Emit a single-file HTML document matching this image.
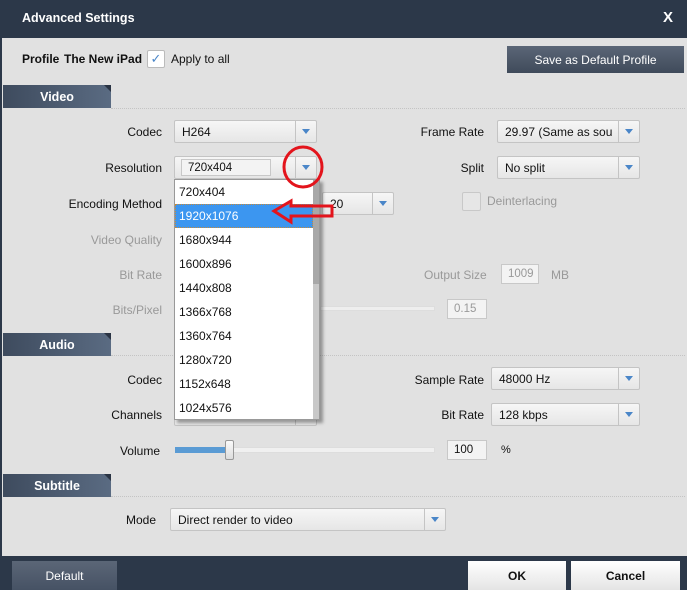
<!DOCTYPE html>
<html><head><meta charset="utf-8"><style>
*{margin:0;padding:0;box-sizing:border-box}
body{width:687px;height:590px;overflow:hidden;background:#e1e1e1;font-family:"Liberation Sans",Arial,sans-serif;font-size:12px;color:#111;position:relative}
.a{position:absolute}
.title{left:0;top:0;width:687px;height:38px;background:#2c3849;color:#fff;font-weight:bold;font-size:12.5px}
.lbl{text-align:right;width:140px;white-space:nowrap}
.dis{color:#999}
.cb{background:linear-gradient(#f6f6f6,#e6e6e6);border:1px solid #c4c4c4;border-radius:2px;height:23px;padding:4px 7px;white-space:nowrap;overflow:hidden}
.arr{position:absolute;right:0;top:0;width:21px;height:21px;border-left:1px solid #c4c4c4}
.arr:after{content:"";position:absolute;left:6px;top:8px;border-left:4px solid transparent;border-right:4px solid transparent;border-top:5px solid #4a86c8}
.tab{left:3px;width:108px;height:23px;background:linear-gradient(90deg,#3e4b5e,#5a6b82);color:#fff;font-weight:bold;font-size:12.5px;padding:5px 0 0 0;text-align:center;width:108px}
.tab:after{content:"";position:absolute;right:0;top:0;border-left:7px solid transparent;border-top:7px solid #2a3444}
.dot{height:1px;border-top:1px dotted #c4c4c4;left:111px;width:574px}
.box{background:#f3f3f3;border:1px solid #c8c8c8;height:20px;padding:3px 6px;font-size:11.5px}
.list{left:174px;top:179px;width:146px;height:241px;background:#fff;border:1px solid #999;box-shadow:3px 3px 3px rgba(0,0,0,.35)}
.it{position:absolute;left:0;width:138px;height:24px;padding:5px 4px}
.btn{text-align:center;padding-top:8px}
</style></head><body>
<div class="a" style="left:0;top:0;width:2px;height:590px;background:#2c3849"></div>
<div class="a title"><span class="a" style="left:22px;top:11px">Advanced Settings</span><span class="a" style="left:663px;top:9px;font-size:15px">X</span></div>
<div class="a" style="left:22px;top:52px;font-weight:bold">Profile</div>
<div class="a" style="left:64px;top:52px;font-weight:bold">The New iPad</div>
<div class="a" style="left:147px;top:50px;width:18px;height:18px;background:#fff;border:1px solid #bbb;border-radius:2px;color:#4a86c8;text-align:center;line-height:16px;font-size:13px">✓</div>
<div class="a" style="left:171px;top:52px">Apply to all</div>
<div class="a btn" style="left:507px;top:46px;width:177px;height:27px;background:linear-gradient(#5b6677,#3f4a5a);color:#fff;padding-top:7px">Save as Default Profile</div>

<div class="a tab" style="top:85px">Video</div><div class="a dot" style="top:108px"></div>
<div class="a lbl" style="left:22px;top:125px">Codec</div>
<div class="a cb" style="left:174px;top:120px;width:143px">H264<div class="arr"></div></div>
<div class="a lbl" style="left:344px;top:125px">Frame Rate</div>
<div class="a cb" style="left:497px;top:120px;width:143px">29.97 (Same as sou<div class="arr"></div></div>
<div class="a lbl" style="left:22px;top:161px">Resolution</div>
<div class="a cb" style="left:174px;top:156px;width:143px;padding:2px 6px"><div style="border:1px solid #c8c8c8;background:#f3f3f3;width:90px;height:17px;padding:2px 6px;font-size:11.5px">720x404</div><div class="arr"></div></div>
<div class="a lbl" style="left:344px;top:161px">Split</div>
<div class="a cb" style="left:497px;top:156px;width:143px">No split<div class="arr"></div></div>
<div class="a lbl" style="left:22px;top:197px">Encoding Method</div>
<div class="a cb" style="left:322px;top:192px;width:72px">20<div class="arr"></div></div>
<div class="a" style="left:462px;top:192px;width:19px;height:19px;border:1px solid #c8c8c8;border-radius:2px;background:#e6e6e6"></div>
<div class="a dis" style="left:487px;top:194px">Deinterlacing</div>
<div class="a lbl dis" style="left:22px;top:233px">Video Quality</div>
<div class="a lbl dis" style="left:22px;top:268px">Bit Rate</div>
<div class="a dis" style="left:424px;top:268px">Output Size</div>
<div class="a box dis" style="left:501px;top:264px;width:38px">1009</div>
<div class="a dis" style="left:551px;top:268px">MB</div>
<div class="a lbl dis" style="left:22px;top:303px">Bits/Pixel</div>
<div class="a" style="left:320px;top:306px;width:115px;height:5px;background:#eee;border:1px solid #ddd"></div>
<div class="a box dis" style="left:447px;top:299px;width:40px">0.15</div>

<div class="a tab" style="top:333px">Audio</div><div class="a dot" style="top:355px"></div>
<div class="a lbl" style="left:22px;top:373px">Codec</div>
<div class="a lbl" style="left:344px;top:373px">Sample Rate</div>
<div class="a cb" style="left:491px;top:367px;width:149px">48000 Hz<div class="arr"></div></div>
<div class="a lbl" style="left:22px;top:408px">Channels</div>
<div class="a cb" style="left:174px;top:403px;width:143px"><div class="arr"></div></div>
<div class="a lbl" style="left:344px;top:408px">Bit Rate</div>
<div class="a cb" style="left:491px;top:403px;width:149px">128 kbps<div class="arr"></div></div>
<div class="a lbl" style="left:20px;top:444px">Volume</div>
<div class="a" style="left:175px;top:447px;width:260px;height:6px;background:#f0f0f0;border:1px solid #ddd"></div>
<div class="a" style="left:175px;top:447px;width:52px;height:6px;background:#5a9bd4"></div>
<div class="a" style="left:225px;top:440px;width:9px;height:20px;background:linear-gradient(#fafafa,#ddd);border:1px solid #999;border-radius:2px"></div>
<div class="a box" style="left:447px;top:440px;width:40px">100</div>
<div class="a" style="left:501px;top:444px;font-size:11px">%</div>

<div class="a tab" style="top:474px">Subtitle</div><div class="a dot" style="top:496px"></div>
<div class="a lbl" style="left:16px;top:513px">Mode</div>
<div class="a cb" style="left:170px;top:508px;width:276px">Direct render to video<div class="arr"></div></div>

<div class="a" style="left:0;top:556px;width:687px;height:34px;background:#2c3849"></div>
<div class="a btn" style="left:12px;top:561px;width:105px;height:29px;background:linear-gradient(#5b6677,#465264);color:#fff">Default</div>
<div class="a btn" style="left:468px;top:561px;width:98px;height:29px;background:linear-gradient(#fff,#e4e4e4);font-weight:bold">OK</div>
<div class="a btn" style="left:571px;top:561px;width:109px;height:29px;background:linear-gradient(#fff,#e4e4e4);font-weight:bold">Cancel</div>

<div class="a list">
<div class="it" style="top:0">720x404</div>
<div class="it" style="top:24px;background:#3c96f0;color:#fff;outline:1px dotted #c78a3a;outline-offset:-1px">1920x1076</div>
<div class="it" style="top:48px">1680x944</div>
<div class="it" style="top:72px">1600x896</div>
<div class="it" style="top:96px">1440x808</div>
<div class="it" style="top:120px">1366x768</div>
<div class="it" style="top:144px">1360x764</div>
<div class="it" style="top:168px">1280x720</div>
<div class="it" style="top:192px">1152x648</div>
<div class="it" style="top:216px">1024x576</div>
<div class="a" style="left:138px;top:0;width:6px;height:239px;background:#c8c8c8"></div>
<div class="a" style="left:138px;top:0;width:6px;height:104px;background:#a8a8a8"></div>
</div>
<svg class="a" style="left:0;top:0" width="687" height="590">
<ellipse cx="303" cy="167" rx="19" ry="20" fill="none" stroke="#e3141c" stroke-width="3"/>
<path d="M274 211 L291 201 L291 206 L332 206 L332 216 L291 216 L291 222 Z" fill="none" stroke="#e3141c" stroke-width="3" stroke-linejoin="miter"/>
</svg>
</body></html>
